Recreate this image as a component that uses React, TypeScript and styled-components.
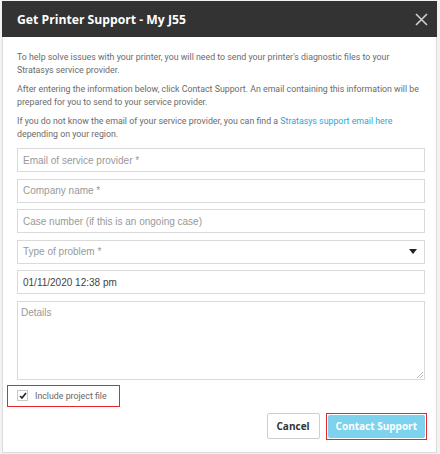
import React from "react";
import styled, { createGlobalStyle } from "styled-components";

const Global = createGlobalStyle`
  html, body { margin: 0; padding: 0; background: #ffffff; }
  * { box-sizing: border-box; }
`;

const Frame = styled.div`
  width: 440px;
  height: 454px;
  padding: 1px 3px 1px 2px;
  background: #f2f2f2;
`;

const Dialog = styled.div`
  width: 435px;
  height: 452px;
  background: #fff;
  display: flex;
  flex-direction: column;
  border-left: 1px solid #dcdcdc;
  border-right: 1px solid #dcdcdc;
  border-bottom: 1px solid #dcdcdc;
`;

const Header = styled.div`
  height: 36px;
  margin: 0 -1px;
  background: #333333;
  display: flex;
  align-items: center;
  justify-content: space-between;
  padding: 0 9px 0 15px;
`;

const Title = styled.h1`
  margin: 0;
  font-family: "Open Sans", "Noto Sans", sans-serif;
  font-weight: 700;
  font-size: 12.2px;
  color: #ffffff;
`;

const Close = styled.button`
  border: 0;
  background: none;
  padding: 0;
  width: 14px;
  height: 14px;
  display: flex;
  align-items: center;
  justify-content: center;
`;

const Body = styled.div`
  flex: 1;
  display: flex;
  flex-direction: column;
  padding: 14px 10px 0 14px;
`;

const Para = styled.p`
  margin: 0 0 7px;
  font-family: Roboto, "Open Sans", sans-serif;
  font-size: 8.8px;
  line-height: 12.5px;
  color: #6b6b6b;
`;

const Link = styled.a`
  color: #1fa8d8;
  text-decoration: none;
`;

const Fields = styled.div`
  display: flex;
  flex-direction: column;
  gap: 6.6px;
  margin-top: 1px;
  margin-right: 1px;
`;

const Field = styled.div<{ $filled?: boolean }>`
  height: 24px;
  border: 1px solid #dadada;
  display: flex;
  align-items: center;
  justify-content: space-between;
  padding: 0 7px 0 5px;
  font-family: "Liberation Sans", Arial, sans-serif;
  font-size: 10px;
  color: ${(p) => (p.$filled ? "#444" : "#999")};
`;

const Area = styled.div`
  height: 79px;
  border: 1px solid #dadada;
  position: relative;
  padding: 5px 3px;
  font-family: "Liberation Sans", Arial, sans-serif;
  font-size: 10px;
  color: #999;
`;

const Grip = styled.svg`
  position: absolute;
  right: 1px;
  bottom: 1px;
`;

const CheckWrap = styled.div`
  margin: 5px 0 0 -10px;
  width: 113px;
  height: 22px;
  border: 1.5px solid #e8262b;
  display: flex;
  align-items: center;
  padding-left: 9px;
  gap: 7px;
`;

const Box = styled.span`
  width: 11px;
  height: 11px;
  border: 1px solid #c8c8c8;
  display: flex;
  align-items: center;
  justify-content: center;
`;

const CheckLabel = styled.span`
  font-family: Roboto, "Open Sans", sans-serif;
  font-size: 8.8px;
  color: #666;
`;

const Actions = styled.div`
  display: flex;
  justify-content: flex-end;
  align-items: center;
  gap: 6px;
  margin-top: 6px;
  margin-right: -1px;
`;

const Btn = styled.button<{ $primary?: boolean }>`
  height: ${(p) => (p.$primary ? "23px" : "26px")};
  padding: 0 ${(p) => (p.$primary ? "8px" : "9px")};
  border-radius: 2px;
  border: ${(p) => (p.$primary ? "0" : "1px solid #cfcfcf")};
  background: ${(p) => (p.$primary ? "#7dd3ee" : "#fff")};
  color: ${(p) => (p.$primary ? "#fff" : "#333")};
  font-family: "Open Sans", "Noto Sans", sans-serif;
  font-weight: 700;
  font-size: 10px;
`;

const Highlight = styled.div`
  border: 1.5px solid #e8262b;
  padding: 1px;
  height: 27px;
  display: flex;
  align-items: center;
`;

export default function App() {
  return (
    <Frame>
      <Global />
      <Dialog>
        <Header>
          <Title>Get Printer Support - My J55</Title>
          <Close aria-label="close">
            <svg width="13" height="13" viewBox="0 0 13 13">
              <path d="M1 1L12 12M12 1L1 12" stroke="#d0d0d0" strokeWidth="1.6" />
            </svg>
          </Close>
        </Header>
        <Body>
          <Para>
            To help solve issues with your printer, you will need to send your printer's diagnostic files to your
            Stratasys service provider.
          </Para>
          <Para>
            After entering the information below, click Contact Support. An email containing this information will be
            prepared for you to send to your service provider.
          </Para>
          <Para>
            If you do not know the email of your service provider, you can find a{" "}
            <Link href="#">Stratasys support email here</Link> depending on your region.
          </Para>
          <Fields>
            <Field>Email of service provider *</Field>
            <Field>Company name *</Field>
            <Field>Case number (if this is an ongoing case)</Field>
            <Field>
              Type of problem *
              <svg width="8" height="5" viewBox="0 0 8 5">
                <path d="M0 0H8L4 5Z" fill="#222" />
              </svg>
            </Field>
            <Field $filled>01/11/2020 12:38 pm</Field>
            <Area>
              Details
              <Grip width="7" height="7" viewBox="0 0 7 7">
                <path d="M7 1L1 7M7 4L4 7" stroke="#aaa" strokeWidth="0.8" />
              </Grip>
            </Area>
          </Fields>
          <CheckWrap>
            <Box>
              <svg width="8" height="7" viewBox="0 0 8 7">
                <path d="M1 4L3 6L7 1" stroke="#222" strokeWidth="1.6" fill="none" />
              </svg>
            </Box>
            <CheckLabel>Include project file</CheckLabel>
          </CheckWrap>
          <Actions>
            <Btn>Cancel</Btn>
            <Highlight>
              <Btn $primary>Contact Support</Btn>
            </Highlight>
          </Actions>
        </Body>
      </Dialog>
    </Frame>
  );
}
